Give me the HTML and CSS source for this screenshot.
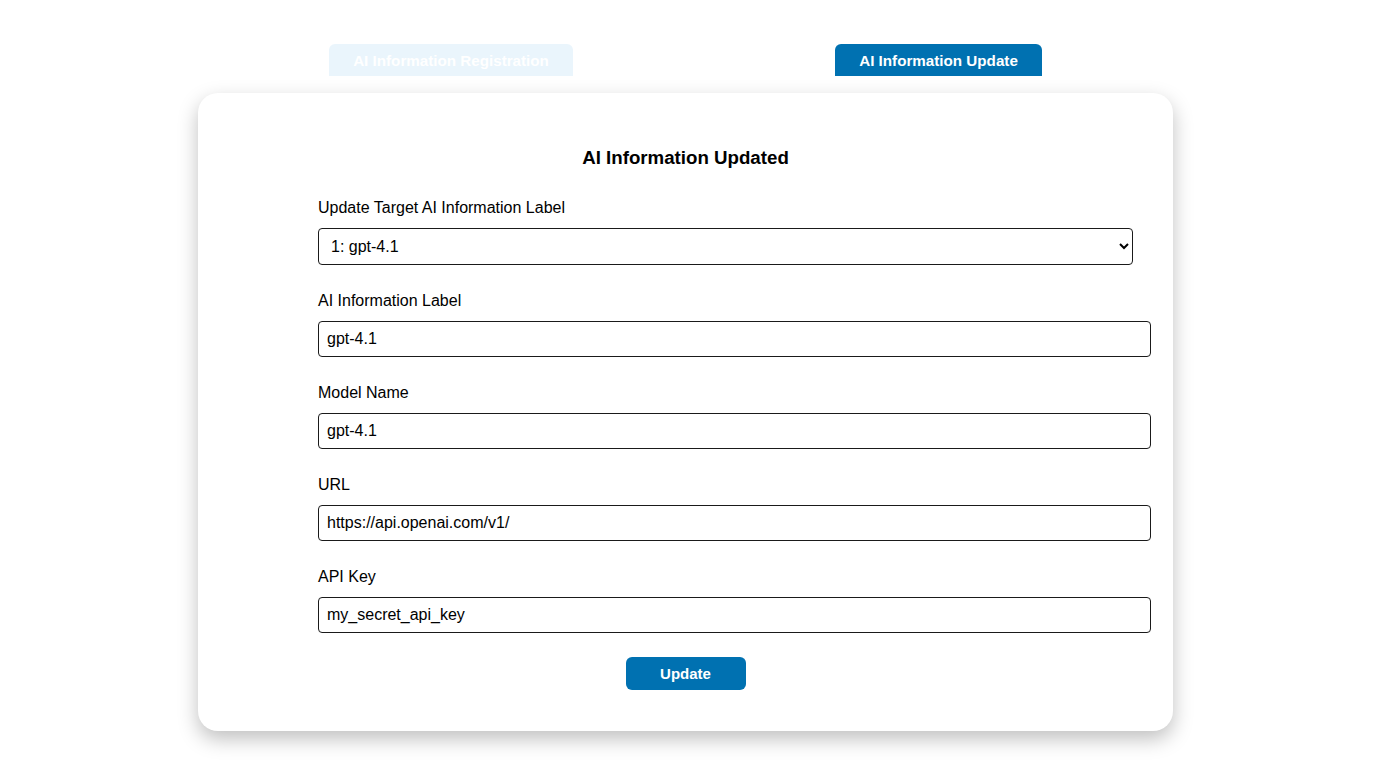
FILE: index.html
```html
<!DOCTYPE html>
<html lang="en">
<head>
<meta charset="utf-8">
<title>AI Information Update</title>
<link rel="stylesheet" href="styles.css">
</head>
<body>
<div class="page">
  <div class="tabs">
    <button class="tab tab-inactive" type="button">AI Information Registration</button>
    <button class="tab tab-active" type="button">AI Information Update</button>
  </div>
  <div class="card">
    <h2 class="title">AI Information Updated</h2>
    <form class="form">
      <div class="field">
        <label class="label" for="target">Update Target AI Information Label</label>
        <select class="select" id="target">
          <option>1: gpt-4.1</option>
        </select>
      </div>
      <div class="field">
        <label class="label" for="ailabel">AI Information Label</label>
        <input class="input" id="ailabel" type="text" value="gpt-4.1">
      </div>
      <div class="field">
        <label class="label" for="model">Model Name</label>
        <input class="input" id="model" type="text" value="gpt-4.1">
      </div>
      <div class="field">
        <label class="label" for="url">URL</label>
        <input class="input" id="url" type="text" value="https://api.openai.com/v1/">
      </div>
      <div class="field">
        <label class="label" for="apikey">API Key</label>
        <input class="input" id="apikey" type="text" value="my_secret_api_key">
      </div>
    </form>
    <div class="actions">
      <button class="submit" type="button">Update</button>
    </div>
  </div>
</div>
</body>
</html>
```
FILE: styles.css
```css
* { box-sizing: border-box; }
html, body { margin: 0; padding: 0; background: #ffffff; }
body {
  font-family: "Liberation Sans", Arial, sans-serif;
  color: #000;
  padding-bottom: 40px;
}
.page {
  width: 975px;
  margin: 44px 0 0 198px;
}
.tabs {
  display: flex;
  justify-content: space-around;
  height: 49px;
}
.tab {
  height: 32px;
  padding: 0 24px;
  border: none;
  border-radius: 6px 6px 0 0;
  font-family: "Liberation Sans", Arial, sans-serif;
  font-weight: bold;
  font-size: 15.2px;
  color: #ffffff;
  cursor: pointer;
}
.tab-inactive { background: #eaf5fc; }
.tab-active { background: #0071b1; }
.card {
  background: #fff;
  border-radius: 20px;
  box-shadow: 0 8px 20px rgba(0, 0, 0, 0.25);
  padding: 55px 22px 41px 120px;
  height: 638px;
}
.title {
  margin: 0 0 30px -98px;
  text-align: center;
  font-size: 18.7px;
  line-height: 20px;
  font-weight: bold;
}
.form {
  display: flex;
  flex-direction: column;
  gap: 26px;
}
.field {
  display: flex;
  flex-direction: column;
  align-items: flex-start;
}
.label {
  font-size: 16px;
  line-height: 20px;
  margin-bottom: 10px;
}
.select {
  width: 815px;
  height: 37px;
  border: 1px solid #1a1a1a;
  border-radius: 4px;
  font-family: "Liberation Sans", Arial, sans-serif;
  font-size: 16px;
  color: #000;
  background: #fff;
  padding: 0 8px;
}
.input {
  width: 833px;
  height: 36px;
  border: 1px solid #1a1a1a;
  border-radius: 4px;
  padding: 0 8px;
  font-family: "Liberation Sans", Arial, sans-serif;
  font-size: 16px;
  color: #000;
}
.actions {
  display: flex;
  justify-content: center;
  margin: 24px 0 0 -98px;
}
.submit {
  width: 120px;
  height: 33px;
  border: none;
  border-radius: 6px;
  background: #0071b1;
  color: #fff;
  font-family: "Liberation Sans", Arial, sans-serif;
  font-weight: bold;
  font-size: 15px;
  cursor: pointer;
}
```
